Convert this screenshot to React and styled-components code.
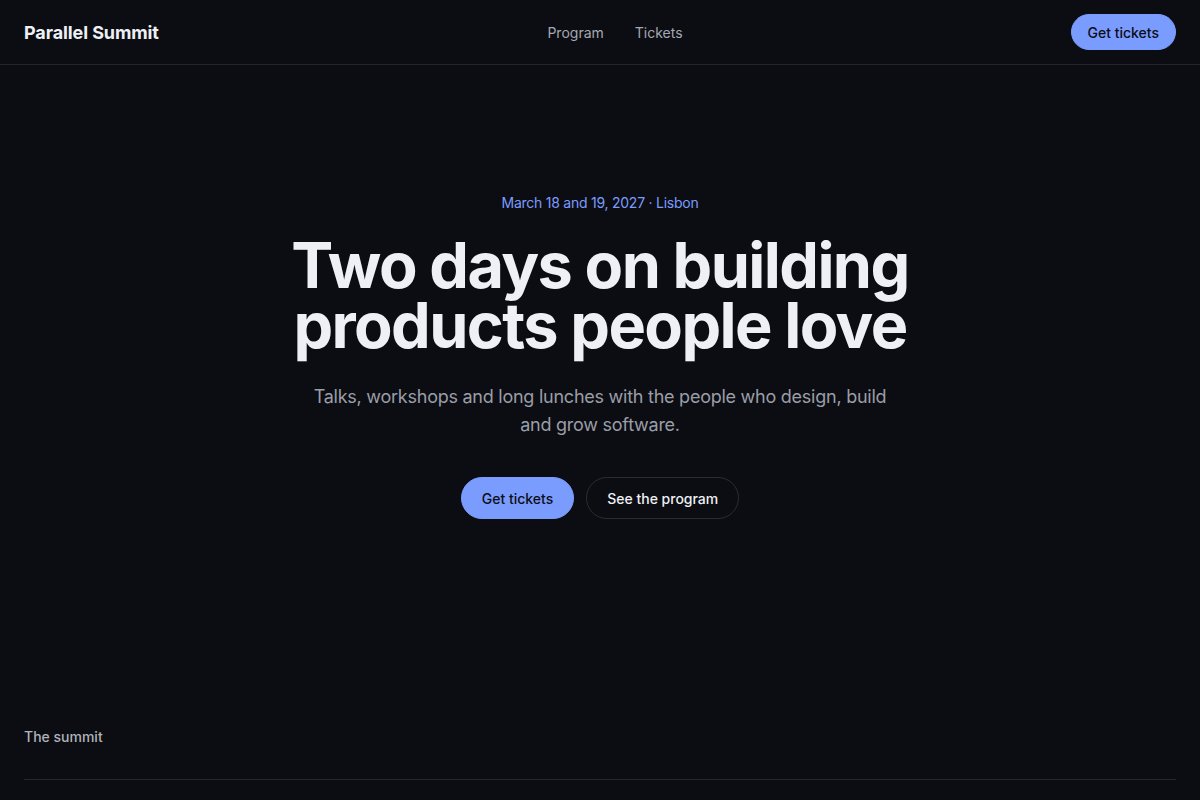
import React from 'react'
import styled, { createGlobalStyle } from 'styled-components'

const GlobalStyle = createGlobalStyle`
  html, body {
    margin: 0;
    padding: 0;
    background: #0c0d12;
  }
  body {
    font-family: Inter, 'Noto Sans', sans-serif;
    color: #eef0f5;
    -webkit-font-smoothing: antialiased;
  }
  * {
    box-sizing: border-box;
  }
`

// Header
const Header = styled.header`
  height: 65px;
  display: grid;
  grid-template-columns: 1fr auto 1fr;
  align-items: center;
  padding: 0 24px;
  border-bottom: 1px solid #23252c;
`
const Logo = styled.a`
  font-size: 18px;
  font-weight: 700;
  letter-spacing: -0.1px;
  color: #eef0f5;
  text-decoration: none;
`
const Nav = styled.nav`
  display: flex;
  gap: 31px;
  margin-left: 30px;
`
const NavLink = styled.a`
  font-size: 14px;
  color: #a4a8b2;
  text-decoration: none;
`
const HeaderActions = styled.div`
  display: flex;
  justify-content: flex-end;
`

const Button = styled.a`
  display: inline-flex;
  align-items: center;
  justify-content: center;
  height: ${(p) => (p.$small ? '36px' : '42px')};
  padding: 0 ${(p) => (p.$small ? '16px' : '20px')};
  border-radius: 999px;
  font-size: 14px;
  font-weight: 500;
  text-decoration: none;
  background: ${(p) => (p.$ghost ? 'transparent' : '#7b9cff')};
  color: ${(p) => (p.$ghost ? '#eef0f5' : '#0c0e16')};
  border: 1px solid ${(p) => (p.$ghost ? '#2a2c34' : '#7b9cff')};
`

// Hero
const Hero = styled.section`
  display: flex;
  flex-direction: column;
  align-items: center;
  text-align: center;
  padding: 128px 24px 0;
  height: 662px;
`
const Eyebrow = styled.p`
  margin: 0;
  font-size: 14px;
  line-height: 20px;
  letter-spacing: -0.25px;
  color: #7b9cff;
`
const Title = styled.h1`
  margin: 22px 0 0;
  font-size: 63px;
  line-height: 60px;
  font-weight: 700;
  letter-spacing: -1.6px;
  color: #eef0f5;
`
const Lead = styled.p`
  margin: 28px 0 0;
  max-width: 590px;
  font-size: 18px;
  line-height: 28px;
  letter-spacing: -0.25px;
  color: #9a9ea8;
  font-weight: 400;
`
const Actions = styled.div`
  display: flex;
  gap: 12px;
  margin-top: 38px;
`

// Section
const Section = styled.section`
  padding: 0 24px;
`
const SectionLabel = styled.h2`
  margin: 0;
  font-size: 14px;
  font-weight: 500;
  line-height: 20px;
  color: #b0b3bb;
  padding-bottom: 32px;
  border-bottom: 1px solid #25272e;
`

export default function App() {
  return (
    <>
      <GlobalStyle />
      <Header>
        <Logo href='#'>Parallel Summit</Logo>
        <Nav>
          <NavLink href='#'>Program</NavLink>
          <NavLink href='#'>Tickets</NavLink>
        </Nav>
        <HeaderActions>
          <Button $small href='#'>
            Get tickets
          </Button>
        </HeaderActions>
      </Header>
      <Hero>
        <Eyebrow>March 18 and 19, 2027 · Lisbon</Eyebrow>
        <Title>
          Two days on building
          <br />
          products people love
        </Title>
        <Lead>
          Talks, workshops and long lunches with the people who design, build
          and grow software.
        </Lead>
        <Actions>
          <Button href='#'>Get tickets</Button>
          <Button $ghost href='#'>
            See the program
          </Button>
        </Actions>
      </Hero>
      <Section>
        <SectionLabel>The summit</SectionLabel>
      </Section>
    </>
  )
}
